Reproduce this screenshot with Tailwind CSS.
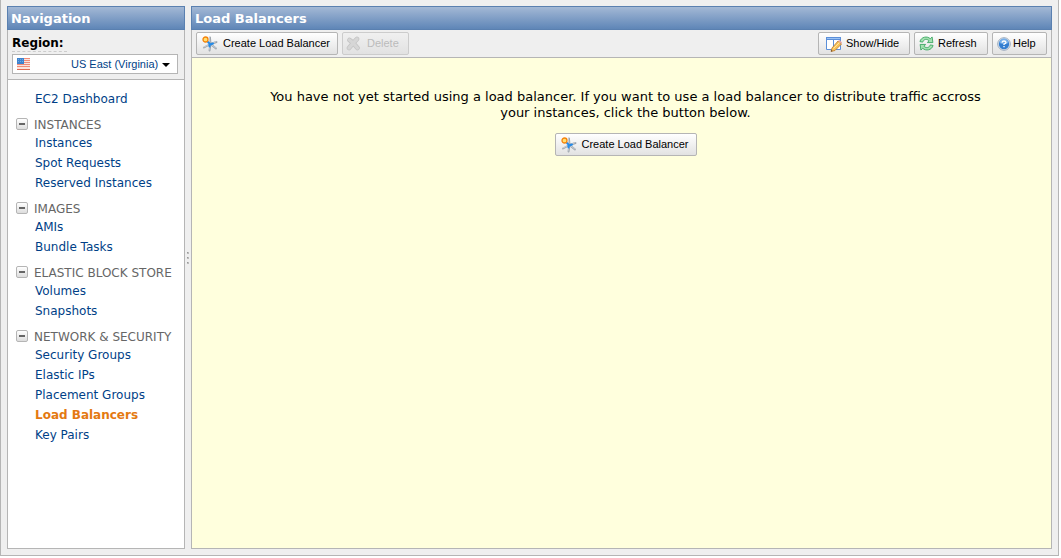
<!DOCTYPE html>
<html lang="en">
<head>
<meta charset="utf-8">
<title>Load Balancers</title>
<script src="https://cdn.jsdelivr.net/npm/@tailwindcss/browser@4"></script>
</head>
<body class="h-screen bg-white pr-0.5 pb-0.5 font-['Verdana','DejaVu_Sans',sans-serif] text-xs text-black">
<svg class="hidden" aria-hidden="true">
  <symbol id="balancer" viewBox="0 0 18 18">
    <g fill="none" stroke-linecap="round">
      <path d="M9.500 9L9 2.500M9.500 9L15.500 7M9.500 9L15 13.500M9.500 9L8.500 15.500M9.500 9L3 12.500" stroke="#9ca3aa" stroke-width="1.900"/>
      <path d="M9 9L8.500 2.500M9.500 9L15 6.700M9.500 9L15 13.200M9 9L8 15.200M9.500 9L3 12" stroke="#d3d8dd" stroke-width=".8"/>
      <path d="M7 7l2.500 2.500M9 9.500l3-1M8.500 9v2.500" stroke="#258be8" stroke-width="2"/>
    </g>
    <circle cx="4.500" cy="4.500" r="2.500" fill="#ffe070" stroke="#f5840c" stroke-width="1.300"/>
  </symbol>
</svg>
<div class="flex h-full border-r border-b border-l border-[#b5b5b5] bg-[#efefef] p-1.5">
  <aside class="flex w-[178px] shrink-0 flex-col border border-[#b5b5b5] bg-white">
    <h2 class="-mx-px -mt-px h-6 shrink-0 border border-[#5a80b0] bg-linear-to-b from-[#a3b8d5] to-[#5f86b7] pl-[3px] text-[13px] leading-[23px] font-bold text-white">Navigation</h2>
    <div class="h-[50px] shrink-0 border-b border-[#b5b5b5] bg-[#efefef] px-1 pt-[5px]">
      <label for="region" class="block w-[55px] border-b border-dashed border-[#cccccc] leading-4 font-bold">Region:</label>
      <div class="relative mt-0.5 mr-0.5">
        <select id="region" class="block h-5 w-full appearance-none border border-[#b5b5b5] bg-white pl-[58px] font-['Liberation_Sans',sans-serif] text-[11px] leading-[18px] text-[#003f87]"><option>US East (Virginia)</option></select>
        <svg class="pointer-events-none absolute top-1 left-[5px] h-3 w-[13px]" viewBox="0 0 13 12"><path fill="#fbe4dd" d="M0 0h13v12H0z"/><path stroke="#f08b78" d="M0 .5h13M0 2.5h13M0 4.5h13M0 6.5h13M0 8.5h13"/><path stroke="#e06a52" d="M0 11.500h13"/><path fill="#3d83cf" d="M0 0h7v6H0z"/><path stroke="#6ea7e2" stroke-dasharray="1 1" d="M1 1.5h5M1 3.5h5"/></svg>
        <svg class="pointer-events-none absolute top-[9px] right-2 h-1 w-2" viewBox="0 0 8 4"><path d="M0 0h8L4 4z"/></svg>
      </div>
    </div>
    <nav class="flex flex-col gap-2 pt-[9px] leading-5 text-[#003f87]">
      <a href="#" class="block pl-[27px]">EC2 Dashboard</a>
      <section>
        <h3 class="flex h-4 items-start gap-1.5 pl-2 leading-4 whitespace-nowrap text-[#666666]"><button aria-label="Collapse Instances" class="mt-px flex size-3 items-center justify-center rounded-xs border border-[#b5b5b5] bg-linear-to-b from-white to-[#dddddd]"><span class="h-0.5 w-1.5 bg-[#666666]"></span></button>INSTANCES</h3>
        <ul class="pl-[27px]"><li><a href="#">Instances</a></li><li><a href="#">Spot Requests</a></li><li><a href="#">Reserved Instances</a></li></ul>
      </section>
      <section>
        <h3 class="flex h-4 items-start gap-1.5 pl-2 leading-4 whitespace-nowrap text-[#666666]"><button aria-label="Collapse Images" class="mt-px flex size-3 items-center justify-center rounded-xs border border-[#b5b5b5] bg-linear-to-b from-white to-[#dddddd]"><span class="h-0.5 w-1.5 bg-[#666666]"></span></button>IMAGES</h3>
        <ul class="pl-[27px]"><li><a href="#">AMIs</a></li><li><a href="#">Bundle Tasks</a></li></ul>
      </section>
      <section>
        <h3 class="flex h-4 items-start gap-1.5 pl-2 leading-4 whitespace-nowrap text-[#666666]"><button aria-label="Collapse Elastic Block Store" class="mt-px flex size-3 items-center justify-center rounded-xs border border-[#b5b5b5] bg-linear-to-b from-white to-[#dddddd]"><span class="h-0.5 w-1.5 bg-[#666666]"></span></button>ELASTIC BLOCK STORE</h3>
        <ul class="pl-[27px]"><li><a href="#">Volumes</a></li><li><a href="#">Snapshots</a></li></ul>
      </section>
      <section>
        <h3 class="flex h-4 items-start gap-1.5 pl-2 leading-4 whitespace-nowrap text-[#666666]"><button aria-label="Collapse Network and Security" class="mt-px flex size-3 items-center justify-center rounded-xs border border-[#b5b5b5] bg-linear-to-b from-white to-[#dddddd]"><span class="h-0.5 w-1.5 bg-[#666666]"></span></button>NETWORK &amp; SECURITY</h3>
        <ul class="pl-[27px]"><li><a href="#">Security Groups</a></li><li><a href="#">Elastic IPs</a></li><li><a href="#">Placement Groups</a></li><li><a href="#" class="font-bold text-[#e47911]">Load Balancers</a></li><li><a href="#">Key Pairs</a></li></ul>
      </section>
    </nav>
  </aside>
  <div class="flex w-1.5 shrink-0 cursor-col-resize items-center justify-center pb-10">
    <svg class="h-3 w-0.5" viewBox="0 0 2 12"><path fill="#999999" d="M0 0h1v1H0zM0 5h1v1H0zM0 10h1v1H0z"/><path fill="#bbbbbb" d="M1 0h1v2H0V1h1zM1 5h1v2H0V6h1zM1 10h1v2H0v-1h1z"/></svg>
  </div>
  <main class="flex min-w-0 flex-1 flex-col border border-[#b5b5b5] bg-[#ffffdd]">
    <h1 class="-mx-px -mt-px h-6 shrink-0 border border-[#5a80b0] bg-linear-to-b from-[#a3b8d5] to-[#5f86b7] pl-[3px] text-[13px] leading-[23px] font-bold text-white">Load Balancers</h1>
    <div class="flex h-7 shrink-0 items-center gap-1 border-b border-[#b5b5b5] bg-[#efefef] px-1 font-['Liberation_Sans',sans-serif] text-[11px]">
      <button class="flex h-[23px] w-[142px] items-center gap-1 rounded-xs border border-[#b5b5b5] bg-linear-to-b from-white to-[#e2e2e2] pl-1"><svg class="size-[18px]"><use href="#balancer"/></svg>Create Load Balancer</button>
      <button disabled class="flex h-[23px] w-[67px] items-center gap-1.5 rounded-xs border border-[#cccccc] bg-linear-to-b from-[#f0f0f0] to-[#e2e2e2] pl-0.5 text-[#bbbbbb]"><svg class="size-4" viewBox="0 0 16 16" fill="none" stroke-linecap="round"><path stroke="#c4c4c4" stroke-width="4.600" d="M4.500 4q3 2 8 8M12 3q-4 4-8 9"/><path stroke="#d6d6d6" stroke-width="3.200" d="M4.500 4q3 2 8 8M12 3q-4 4-8 9"/></svg>Delete</button>
      <button class="ml-auto flex h-[23px] w-[92px] items-center gap-1 rounded-xs border border-[#b5b5b5] bg-linear-to-b from-white to-[#e2e2e2] pl-[7px]"><svg class="size-4" viewBox="0 0 16 16"><path fill="#fff" stroke="#5b8fd9" d="M.5 1.5h14v12H.5zM7.500 2v11"/><path fill="#5b8fd9" d="M0 1h15v3H0z"/><path fill="#9bc3f5" d="M1 2h13v1H1z"/><path fill="#f7c25a" stroke="#b9772c" stroke-width=".8" d="M6 12l6-7 3.500 3-6.500 6.500L5 15.500z"/><path fill="#e9a5a0" d="M12 5l3.500 3 .5-1.500L13.500 4z"/><path fill="#4b3a2a" d="M5 15.500l.4-1.500 1.200 1z"/><path stroke="#ffe7a0" d="M7.500 12.500l6-6"/></svg>Show/Hide</button>
      <button class="flex h-[23px] w-[74px] items-center gap-1 rounded-xs border border-[#b5b5b5] bg-linear-to-b from-white to-[#e2e2e2] pl-1"><svg class="size-[15px]" viewBox="0 0 16 16"><g id="arrow" fill="#a5e2b2" stroke="#35a35c" stroke-width=".9" stroke-linejoin="round"><path d="M1 6C2 1 9-.5 12 3l2-2 .8 6H9l1.700-2C8 2.500 5 3.500 4 6.500z"/></g><use href="#arrow" transform="rotate(180 8 8)"/></svg>Refresh</button>
      <button class="flex h-[23px] w-[55px] items-center gap-0.5 rounded-xs border border-[#b5b5b5] bg-linear-to-b from-white to-[#e2e2e2] pl-1"><svg class="size-[14px]" viewBox="0 0 14 14"><circle cx="7" cy="7" r="6.300" fill="#e4ebf4" stroke="#9aa9bb"/><circle cx="7" cy="7" r="5.200" fill="#347ed0"/><path fill="#76afea" d="M2.500 6a4.500 4.500 0 0 1 9 0q-4.500 2-9 0z"/><path fill="none" stroke="#fff" stroke-width="1.300" d="M5 5.600Q5.200 4 7 4t2 1.500Q9 6.500 7 7.200V8M7 9v1.300"/></svg>Help</button>
    </div>
    <div class="flex flex-col items-center pt-[31px] pr-14 pl-16">
      <p class="text-center text-[13px] leading-4">You have not yet started using a load balancer. If you want to use a load balancer to distribute traffic accross your instances, click the button below.</p>
      <button class="mt-3 flex h-[23px] w-[142px] items-center gap-1 rounded-xs border border-[#b5b5b5] bg-linear-to-b from-white to-[#e2e2e2] pl-1 font-['Liberation_Sans',sans-serif] text-[11px]"><svg class="size-[18px]"><use href="#balancer"/></svg>Create Load Balancer</button>
    </div>
  </main>
</div>
</body>
</html>
